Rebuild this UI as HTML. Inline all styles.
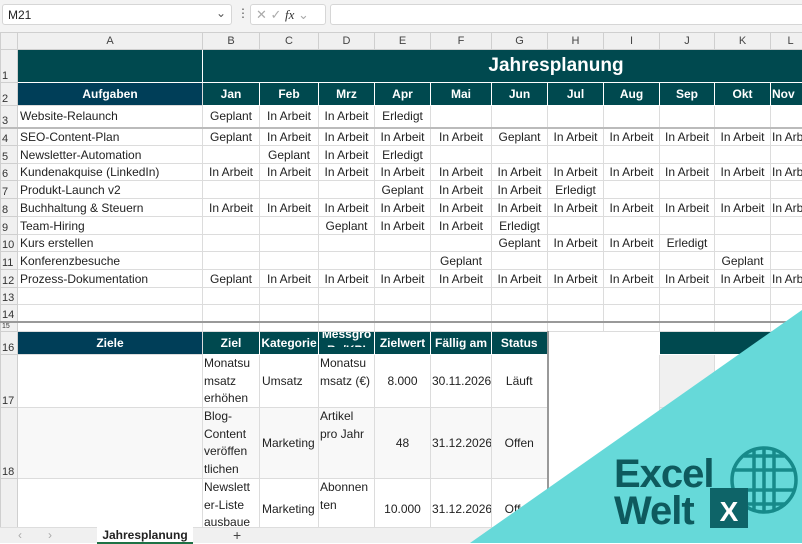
<!DOCTYPE html><html><head><style>
*{margin:0;padding:0;box-sizing:border-box}
body{width:802px;height:543px;overflow:hidden;background:#fff;font-family:"Liberation Sans",sans-serif;font-size:12px;color:#222;position:relative}
.top{position:absolute;left:0;top:0;width:802px;height:32px;background:#f3f3f3}
.nb{position:absolute;left:2px;top:4px;width:230px;height:21px;background:#fff;border:1px solid #d6d6d6;border-radius:3px;font-size:12px;padding:3px 5px}
.fx{position:absolute;left:250px;top:4px;width:76px;height:21px;background:#fff;border:1px solid #d6d6d6;border-radius:3px;color:#aaa;font-size:13px;padding:2px 5px}
.fb{position:absolute;left:330px;top:4px;width:480px;height:21px;background:#fff;border:1px solid #d6d6d6;border-radius:3px}
table{position:absolute;left:0;top:32px;border-collapse:collapse;table-layout:fixed;width:810px}
td{border:1px solid #dcdcdc;overflow:hidden;white-space:nowrap;text-align:center;padding:0 1px;font-size:12px;line-height:14px}
td.rh{background:#f0f0f0;color:#333;text-align:left;vertical-align:bottom;padding:0 0 1px 1px;font-size:11px;border-color:#cfcfcf;line-height:9px}
tr.ch td{background:#f0f0f0;color:#444;font-size:11px;border-color:#cfcfcf}
td.a{text-align:left;padding-left:2px}
.t{background:#00494f;color:#fff;font-weight:bold;border-color:#fff}
.n{background:#003e58;color:#fff;font-weight:bold}
.w{text-align:left;vertical-align:top;padding:0 1px}
.w div{white-space:normal;line-height:17.5px;overflow:hidden}
.tabs{position:absolute;left:0;top:527px;width:802px;height:16px;background:#f0f0f0;border-top:1px solid #ddd}
</style></head><body>
<div class="top"><div class="nb">M21<span style="position:absolute;right:5px;top:1px;color:#555">⌄</span></div>
<div style="position:absolute;left:237px;top:6px;color:#555">⋮</div>
<div class="fx">✕ ✓ <i style="color:#333;font-family:'Liberation Serif'">fx</i> ⌄</div><div class="fb"></div></div>
<table>
<colgroup><col style="width:17px"><col style="width:185px"><col style="width:57px"><col style="width:59px"><col style="width:56px"><col style="width:56px"><col style="width:61px"><col style="width:56px"><col style="width:56px"><col style="width:56px"><col style="width:55px"><col style="width:56px"><col style="width:40px"></colgroup>
<tr class="ch" style="height:17px"><td></td><td>A</td><td>B</td><td>C</td><td>D</td><td>E</td><td>F</td><td>G</td><td>H</td><td>I</td><td>J</td><td>K</td><td>L</td></tr>
<tr style="height:33px"><td class="rh">1</td><td class="t"></td><td class="t" colspan="11" style="font-size:19px;padding-left:100px;border-left:1px solid #6a9">Jahresplanung</td></tr>
<tr style="height:23px"><td class="rh">2</td><td class="n">Aufgaben</td><td class="t">Jan</td><td class="t">Feb</td><td class="t">Mrz</td><td class="t">Apr</td><td class="t">Mai</td><td class="t">Jun</td><td class="t">Jul</td><td class="t">Aug</td><td class="t">Sep</td><td class="t">Okt</td><td class="t" style="text-align:left">Nov</td></tr>
<tr style="height:22px;border-bottom:2px solid #bbb"><td class="rh">3</td><td class="a">Website-Relaunch</td><td>Geplant</td><td>In Arbeit</td><td>In Arbeit</td><td>Erledigt</td><td></td><td></td><td></td><td></td><td></td><td></td><td></td></tr>
<tr style="height:18px"><td class="rh">4</td><td class="a">SEO-Content-Plan</td><td>Geplant</td><td>In Arbeit</td><td>In Arbeit</td><td>In Arbeit</td><td>In Arbeit</td><td>Geplant</td><td>In Arbeit</td><td>In Arbeit</td><td>In Arbeit</td><td>In Arbeit</td><td style="text-align:left">In Arbeit</td></tr>
<tr style="height:18px"><td class="rh">5</td><td class="a">Newsletter-Automation</td><td></td><td>Geplant</td><td>In Arbeit</td><td>Erledigt</td><td></td><td></td><td></td><td></td><td></td><td></td><td></td></tr>
<tr style="height:17px"><td class="rh">6</td><td class="a">Kundenakquise (LinkedIn)</td><td>In Arbeit</td><td>In Arbeit</td><td>In Arbeit</td><td>In Arbeit</td><td>In Arbeit</td><td>In Arbeit</td><td>In Arbeit</td><td>In Arbeit</td><td>In Arbeit</td><td>In Arbeit</td><td style="text-align:left">In Arbeit</td></tr>
<tr style="height:18px"><td class="rh">7</td><td class="a">Produkt-Launch v2</td><td></td><td></td><td></td><td>Geplant</td><td>In Arbeit</td><td>In Arbeit</td><td>Erledigt</td><td></td><td></td><td></td><td></td></tr>
<tr style="height:18px"><td class="rh">8</td><td class="a">Buchhaltung &amp; Steuern</td><td>In Arbeit</td><td>In Arbeit</td><td>In Arbeit</td><td>In Arbeit</td><td>In Arbeit</td><td>In Arbeit</td><td>In Arbeit</td><td>In Arbeit</td><td>In Arbeit</td><td>In Arbeit</td><td style="text-align:left">In Arbeit</td></tr>
<tr style="height:18px"><td class="rh">9</td><td class="a">Team-Hiring</td><td></td><td></td><td>Geplant</td><td>In Arbeit</td><td>In Arbeit</td><td>Erledigt</td><td></td><td></td><td></td><td></td><td></td></tr>
<tr style="height:17px"><td class="rh">10</td><td class="a">Kurs erstellen</td><td></td><td></td><td></td><td></td><td></td><td>Geplant</td><td>In Arbeit</td><td>In Arbeit</td><td>Erledigt</td><td></td><td></td></tr>
<tr style="height:18px"><td class="rh">11</td><td class="a">Konferenzbesuche</td><td></td><td></td><td></td><td></td><td>Geplant</td><td></td><td></td><td></td><td></td><td>Geplant</td><td></td></tr>
<tr style="height:18px"><td class="rh">12</td><td class="a">Prozess-Dokumentation</td><td>Geplant</td><td>In Arbeit</td><td>In Arbeit</td><td>In Arbeit</td><td>In Arbeit</td><td>In Arbeit</td><td>In Arbeit</td><td>In Arbeit</td><td>In Arbeit</td><td>In Arbeit</td><td style="text-align:left">In Arbeit</td></tr>
<tr style="height:17px"><td class="rh">13</td><td></td><td></td><td></td><td></td><td></td><td></td><td></td><td></td><td></td><td></td><td></td><td></td></tr>
<tr style="height:17px;border-bottom:2px solid #999"><td class="rh">14</td><td></td><td></td><td></td><td></td><td></td><td></td><td></td><td></td><td></td><td></td><td></td><td></td></tr>
<tr style="height:10px"><td class="rh" style="font-size:7px;line-height:7px">15</td><td></td><td></td><td></td><td></td><td></td><td></td><td></td><td></td><td></td><td></td><td></td><td></td></tr>
<tr style="height:23px"><td class="rh">16</td><td class="n">Ziele</td><td class="t">Ziel</td><td class="t">Kategorie</td><td class="t" style="vertical-align:top"><div style="height:21px;overflow:hidden;white-space:normal;line-height:16px;margin-top:-6px">Messgro<br>Be/KPI</div></td><td class="t">Zielwert</td><td class="t">Fällig am</td><td class="t">Status</td><td style="border:none;border-left:2px solid #999"></td><td style="border:none"></td><td class="t" colspan="3"></td></tr>
<tr style="height:53px"><td class="rh">17</td><td></td><td class="w"><div style="height:52px">Monatsu msatz erhöhen</div></td><td class="a">Umsatz</td><td class="w"><div style="height:52px">Monatsu msatz (€)</div></td><td>8.000</td><td>30.11.2026</td><td>Läuft</td><td style="border:none;border-left:2px solid #999"></td><td style="border:none"></td><td style="background:#f0f0f0"></td><td style="border:none"></td><td style="border:none"></td></tr>
<tr style="height:71px;background:#f8f8f8"><td class="rh">18</td><td></td><td class="w"><div style="height:70px">Blog-Content veröffen tlichen</div></td><td class="a">Marketing</td><td class="w"><div style="height:70px">Artikel pro Jahr</div></td><td>48</td><td>31.12.2026</td><td>Offen</td><td style="border:none;border-left:2px solid #999;background:#fff"></td><td style="border:none;background:#fff"></td><td style="background:#f0f0f0"></td><td style="border:none"></td><td style="border:none"></td></tr>
<tr style="height:60px"><td class="rh">19</td><td></td><td class="w"><div style="height:59px">Newslett er-Liste ausbaue</div></td><td class="a">Marketing</td><td class="w"><div style="height:59px">Abonnen ten</div></td><td>10.000</td><td>31.12.2026</td><td>Offen</td><td style="border:none;border-left:2px solid #999"></td><td style="border:none"></td><td></td><td style="border:none"></td><td style="border:none"></td></tr>
</table>
<div class="tabs"><span style="position:absolute;left:18px;top:0;color:#aaa">‹</span><span style="position:absolute;left:48px;top:0;color:#aaa">›</span>
<div style="position:absolute;left:97px;top:-1px;width:96px;height:17px;background:#fff;font-weight:bold;font-size:12px;text-align:center;line-height:16px;border-bottom:2px solid #1e7145">Jahresplanung</div>
<span style="position:absolute;left:233px;top:-1px;font-size:14px;color:#444">+</span></div>
<svg style="position:absolute;left:0;top:0" width="802" height="543">
<polygon points="470,543 802,310 802,543" fill="#66d9d9"/>
<g fill="none" stroke="#178a8a" stroke-width="3.5">
<circle cx="764" cy="480" r="32"/>
<line x1="732" y1="470" x2="796" y2="470"/><line x1="734" y1="490" x2="794" y2="490"/><line x1="744" y1="456" x2="784" y2="456"/><line x1="742" y1="504" x2="786" y2="504"/>
<line x1="754" y1="449" x2="754" y2="511"/><line x1="774" y1="449" x2="774" y2="511"/><line x1="764" y1="448" x2="764" y2="512"/>
</g>
<rect x="710" y="488" width="38" height="40" fill="#0e6468"/>
<text x="729" y="521" fill="#fff" font-family="Liberation Sans" font-weight="bold" font-size="28" text-anchor="middle">X</text>
<text x="614" y="487" fill="#0e5a5e" font-family="Liberation Sans" font-weight="bold" font-size="40" letter-spacing="-1">Excel</text>
<text x="614" y="524" fill="#0e5a5e" font-family="Liberation Sans" font-weight="bold" font-size="40" letter-spacing="-1">Welt</text>
</svg>
</body></html>
